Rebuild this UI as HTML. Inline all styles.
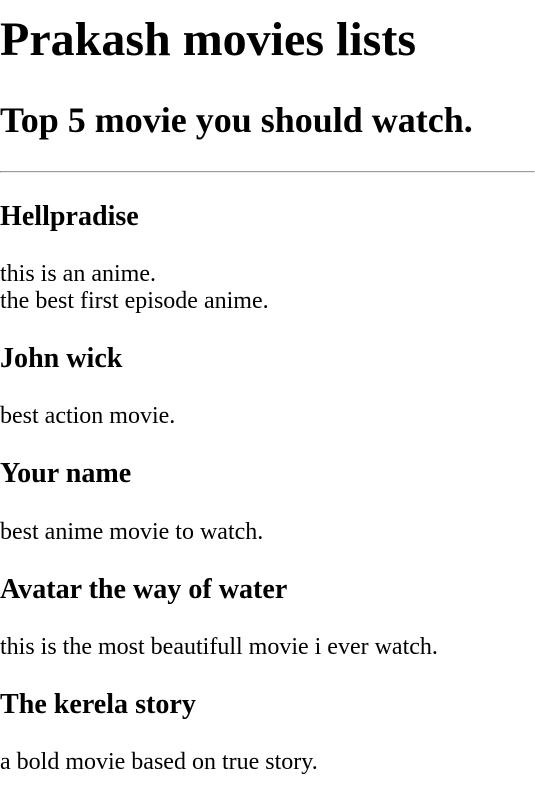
<!DOCTYPE html>
<html>
<head>
<meta charset="utf-8">
<style>
html{zoom:1.5;}
body{margin:0;font-family:"Liberation Serif",serif;color:#000;background:#fff;}
h1{margin-top:8px;}
hr{margin-left:0;margin-right:0;}
</style>
</head>
<body>
<h1>Prakash movies lists</h1>
<h2>Top 5 movie you should watch.</h2>
<hr>
<h3>Hellpradise</h3>
<p>this is an anime.<br>the best first episode anime.</p>
<h3>John wick</h3>
<p>best action movie.</p>
<h3>Your name</h3>
<p>best anime movie to watch.</p>
<h3>Avatar the way of water</h3>
<p>this is the most beautifull movie i ever watch.</p>
<h3>The kerela story</h3>
<p>a bold movie based on true story.</p>
</body>
</html>
